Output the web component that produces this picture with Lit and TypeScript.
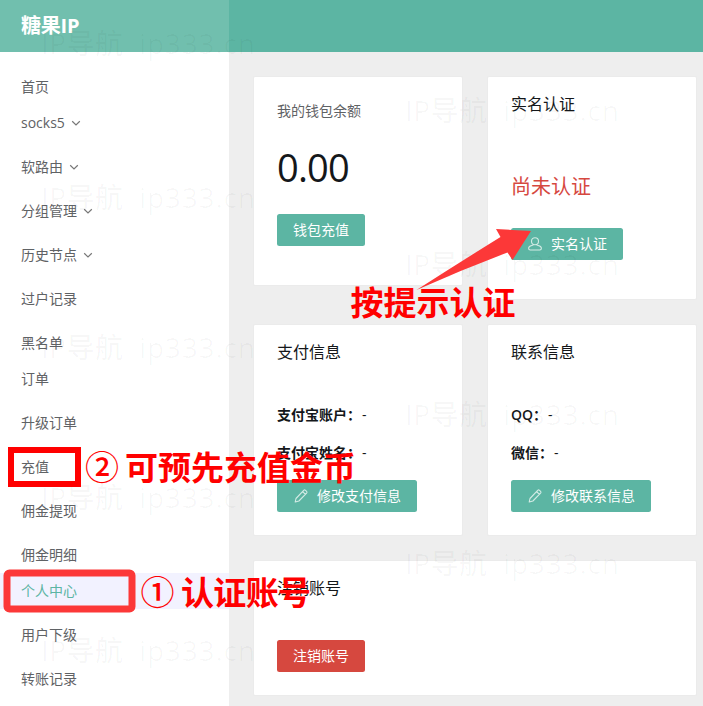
import { LitElement, html, css, svg } from "lit";
import { customElement, property } from "lit/decorators.js";
import { classMap } from "lit/directives/class-map.js";

interface NavItem {
  label: string;
  expandable?: boolean;
  tight?: boolean;
  active?: boolean;
}

const NAV: NavItem[] = [
  { label: "首页", tight: true },
  { label: "socks5", expandable: true },
  { label: "软路由", expandable: true },
  { label: "分组管理", expandable: true },
  { label: "历史节点", expandable: true },
  { label: "过户记录" },
  { label: "黑名单", tight: true },
  { label: "订单" },
  { label: "升级订单" },
  { label: "充值" },
  { label: "佣金提现" },
  { label: "佣金明细", tight: true },
  { label: "个人中心", active: true },
  { label: "用户下级" },
  { label: "转账记录" },
];

const MARKS: [number, number][] = [
  [43, 54], [43, 208], [43, 358], [43, 508], [43, 661],
  [407, 121], [407, 275], [407, 425], [407, 574],
];

@customElement("side-nav")
export class SideNav extends LitElement {
  static styles = css`
    :host { display: block; width: 229px; background: #fff; }
    .brand {
      height: 52px; box-sizing: border-box; padding: 0 0 4px 21px; background: #71bfae; color: #fff;
      font-size: 20px; font-weight: 700; display: flex; align-items: center; letter-spacing: -0.2px;
    }
    .list { display: flex; flex-direction: column; padding-top: 17px; }
    .item {
      height: 36px; margin-bottom: 8px; padding: 0 0 2px 21px; box-sizing: border-box; display: flex; align-items: center;
      gap: 6px; color: #5f6265; font-size: 14px;
    }
    .tight { margin-bottom: 0; }
    .active { background: #f2f2ff; color: #5cb5a3; }
    .chev { width: 10px; height: 10px; margin-top: 2px; fill: none; stroke: #777; stroke-width: 1.2; }
  `;
  render() {
    return html`
      <div class="brand">糖果IP</div>
      <div class="list">
        ${NAV.map(
          (n) => html`<div class=${classMap({ item: true, tight: !!n.tight, active: !!n.active })}>
            <span>${n.label}</span>
            ${n.expandable ? html`<svg class="chev" viewBox="0 0 10 10"><path d="M1.2 3.3 5 7 8.8 3.3" /></svg>` : ""}
          </div>`
        )}
      </div>
    `;
  }
}

@customElement("action-button")
export class ActionButton extends LitElement {
  @property() icon = "";
  @property({ type: Boolean, reflect: true }) danger = false;
  static styles = css`
    :host {
      display: inline-flex; align-items: center; height: 32px; padding: 0 16px; box-sizing: border-box;
      border-radius: 2.5px; background: #5cb5a3; color: #fff; font-size: 14px; font-weight: 400;
    }
    :host([danger]) { background: #d6483f; }
    .icon { width: 16px; height: 16px; margin-right: 8px; fill: none; stroke: #d3ebe5; stroke-width: 1.1; stroke-linejoin: round; }
  `;
  render() {
    const shape =
      this.icon === "user"
        ? svg`<circle cx="8" cy="5.2" r="3.5"/><path d="M6.4 8.4C6.4 9.8 1.6 9.2 1.6 12.3 1.6 13.6 2.1 14 3.2 14H12.8C13.9 14 14.4 13.6 14.4 12.3 14.4 9.2 9.6 9.8 9.6 8.4"/>`
        : svg`<path d="M2.2 14 3 10.5 10.7 2.3Q11.6 1.5 12.5 2.3L13.6 3.4Q14.4 4.3 13.6 5.2L5.9 13 2.2 14ZM9.6 3.5 12.4 6.3"/>`;
    return html`${this.icon ? html`<svg class="icon" viewBox="0 0 16 16">${shape}</svg>` : ""}<slot></slot>`;
  }
}

@customElement("app-root")
export class AppRoot extends LitElement {
  static styles = css`
    :host {
      display: block; position: relative; width: 703px; height: 706px; overflow: hidden;
      font-family: "Open Sans", "Noto Sans CJK SC", sans-serif; font-weight: 400; background: #eee; color: #14171a;
    }
    .shell { display: flex; height: 706px; }
    .main { flex: 1; }
    .bar { height: 52px; background: #5cb5a3; }
    .grid {
      display: grid; grid-template-columns: 210px 210px; column-gap: 24px; row-gap: 24px;
      align-items: start; padding: 24px 0 0 24px;
    }
    .card {
      box-sizing: border-box; background: #fff; border: 1px solid #ebebeb; border-radius: 2px;
      padding: 0 23px; display: flex; flex-direction: column; align-items: flex-start; line-height: 22px;
    }
    .wallet { height: 210px; padding-top: 23px; }
    .verify { height: 224px; padding-top: 16px; }
    .info { height: 212px; padding-top: 16px; }
    .close { height: 136px; padding-top: 16px; grid-column: span 2; }
    .muted { font-size: 14px; color: #5f6265; }
    .amount { font-size: 38px; line-height: 50px; margin: 20px 0 22px; letter-spacing: -0.8px; }
    .title { font-size: 16px; }
    .warn { font-size: 20px; line-height: 28px; color: #d6483f; margin: 58px 0 27px; }
    .row { font-size: 14px; display: flex; height: 22px; }
    .row b { font-weight: 600; }
    .dash { margin-left: 1px; }
    .first { margin: 41px 0 16px; }
    .under { margin-top: 16px; }
    .last { margin-top: 41px; }
    .overlay { position: absolute; inset: 0; width: 703px; height: 706px; pointer-events: none; }
    .mark { font-size: 28px; fill: #000; fill-opacity: 0.03; font-weight: 500; }
    .note { font-family: "Noto Sans CJK SC", sans-serif; font-weight: 600; font-size: 33px; fill: #f00; }
    .num { font-family: "Noto Sans CJK SC", sans-serif; font-weight: 500; font-size: 34px; fill: #f00; }
  `;
  render() {
    return html`
      <div class="shell">
        <side-nav></side-nav>
        <div class="main">
          <div class="bar"></div>
          <div class="grid">
            <div class="card wallet">
              <div class="muted">我的钱包余额</div>
              <div class="amount">0.00</div>
              <action-button>钱包充值</action-button>
            </div>
            <div class="card verify">
              <div class="title">实名认证</div>
              <div class="warn">尚未认证</div>
              <action-button icon="user">实名认证</action-button>
            </div>
            <div class="card info">
              <div class="title">支付信息</div>
              <div class="row first"><b>支付宝账户：</b><span class="dash">-</span></div>
              <div class="row"><b>支付宝姓名：</b><span class="dash">-</span></div>
              <action-button class="under" icon="edit">修改支付信息</action-button>
            </div>
            <div class="card info">
              <div class="title">联系信息</div>
              <div class="row first"><b>QQ：</b><span class="dash">-</span></div>
              <div class="row"><b>微信：</b><span class="dash">-</span></div>
              <action-button class="under" icon="edit">修改联系信息</action-button>
            </div>
            <div class="card close">
              <div class="title">注销账号</div>
              <action-button class="last" danger>注销账号</action-button>
            </div>
          </div>
        </div>
      </div>
      <svg class="overlay" viewBox="0 0 703 706">
        ${MARKS.map(
          ([x, y]) => svg`<text class="mark" x=${x - 2} y=${y} textLength="82">IP导航</text>
            <text class="mark" x=${x + 96} y=${y} textLength="116">ip333.cn</text>`
        )}
        <rect x="11" y="450" width="67" height="34" fill="none" stroke="#f00" stroke-width="6" />
        <rect x="7" y="573" width="125" height="36" rx="2.5" fill="none" stroke="#fc3838" stroke-width="7" />
        <path d="M531 231 496 229 500.5 237Q457 264 416.5 290 461 270 507.5 252.5L512.5 260Z" fill="#fc3838" />
        <text class="num" x="85" y="480">②</text>
        <text class="note" x="125" y="480" textLength="231">可预先充值金币</text>
        <text class="num" x="140.5" y="605">①</text>
        <text class="note" x="181" y="604.5" textLength="130">认证账号</text>
        <text class="note" x="350.5" y="314.500" textLength="165">按提示认证</text>
      </svg>
    `;
  }
}
